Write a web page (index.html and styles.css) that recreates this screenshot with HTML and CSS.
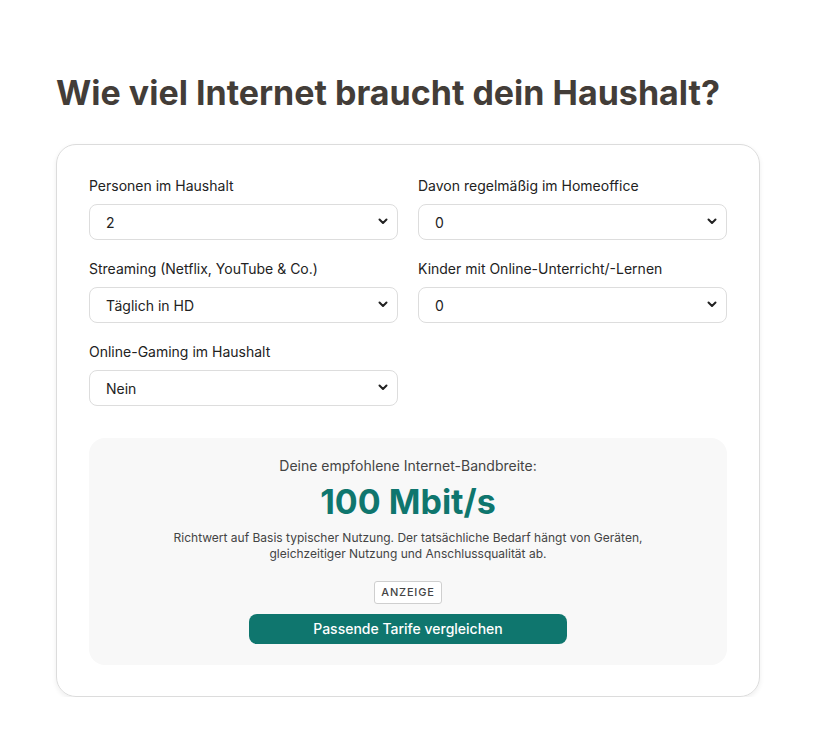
FILE: index.html
```html
<!DOCTYPE html>
<html lang="de">
<head>
<meta charset="utf-8">
<title>Bandbreiten-Rechner</title>
<link rel="stylesheet" href="styles.css">
</head>
<body>
<main class="page">
  <h1 class="title">Wie viel Internet braucht dein Haushalt?</h1>
  <section class="card">
    <div class="grid">
      <div class="field">
        <label class="label">Personen im Haushalt</label>
        <div class="select-wrap">
          <select class="select"><option>2</option></select>
          <svg class="chev" viewBox="0 0 10 7" width="10" height="7"><path d="M1.5 1.5 L5 5 L8.5 1.5" fill="none" stroke="#222" stroke-width="2" stroke-linecap="round" stroke-linejoin="round"/></svg>
        </div>
      </div>
      <div class="field">
        <label class="label">Davon regelmäßig im Homeoffice</label>
        <div class="select-wrap">
          <select class="select"><option>0</option></select>
          <svg class="chev" viewBox="0 0 10 7" width="10" height="7"><path d="M1.5 1.5 L5 5 L8.5 1.5" fill="none" stroke="#222" stroke-width="2" stroke-linecap="round" stroke-linejoin="round"/></svg>
        </div>
      </div>
      <div class="field">
        <label class="label">Streaming (Netflix, YouTube &amp; Co.)</label>
        <div class="select-wrap">
          <select class="select"><option>Täglich in HD</option></select>
          <svg class="chev" viewBox="0 0 10 7" width="10" height="7"><path d="M1.5 1.5 L5 5 L8.5 1.5" fill="none" stroke="#222" stroke-width="2" stroke-linecap="round" stroke-linejoin="round"/></svg>
        </div>
      </div>
      <div class="field">
        <label class="label">Kinder mit Online-Unterricht/-Lernen</label>
        <div class="select-wrap">
          <select class="select"><option>0</option></select>
          <svg class="chev" viewBox="0 0 10 7" width="10" height="7"><path d="M1.5 1.5 L5 5 L8.5 1.5" fill="none" stroke="#222" stroke-width="2" stroke-linecap="round" stroke-linejoin="round"/></svg>
        </div>
      </div>
      <div class="field">
        <label class="label">Online-Gaming im Haushalt</label>
        <div class="select-wrap">
          <select class="select"><option>Nein</option></select>
          <svg class="chev" viewBox="0 0 10 7" width="10" height="7"><path d="M1.5 1.5 L5 5 L8.5 1.5" fill="none" stroke="#222" stroke-width="2" stroke-linecap="round" stroke-linejoin="round"/></svg>
        </div>
      </div>
    </div>
    <div class="result">
      <p class="result-label">Deine empfohlene Internet-Bandbreite:</p>
      <p class="result-value">100 Mbit/s</p>
      <p class="result-note">Richtwert auf Basis typischer Nutzung. Der tatsächliche Bedarf hängt von Geräten,<br>gleichzeitiger Nutzung und Anschlussqualität ab.</p>
      <span class="ad">ANZEIGE</span>
      <a class="cta" href="#">Passende Tarife vergleichen</a>
    </div>
  </section>
</main>
</body>
</html>
```

FILE: styles.css
```css
* { box-sizing: border-box; }
html, body { margin: 0; padding: 0; background: #fff; }
body {
  font-family: Inter, "Liberation Sans", Arial, sans-serif;
  color: #222;
}
.page {
  width: 704px;
  margin: 0 0 0 56px;
  padding-top: 72px;
}
.title {
  margin: 0 0 30px;
  font-size: 34px;
  line-height: 42px;
  font-weight: 700;
  color: #433d38;
}
.card {
  border: 1px solid #dcdcdc;
  border-radius: 20px;
  padding: 32px 32px 31px;
  box-shadow: 0 2px 5px rgba(0,0,0,0.07);
}
.grid {
  display: grid;
  grid-template-columns: 1fr 1fr;
  column-gap: 20px;
  row-gap: 20px;
}
.field { display: flex; flex-direction: column; gap: 9px; }
.label { font-size: 14px; line-height: 18px; color: #222; }
.select-wrap { position: relative; }
.select {
  appearance: none;
  -webkit-appearance: none;
  width: 100%;
  height: 36px;
  border: 1px solid #dddddd;
  border-radius: 8px;
  background: #fff;
  padding: 0 16px;
  font-family: inherit;
  font-size: 14px;
  color: #222;
}
.chev { position: absolute; right: 10px; top: 14px; pointer-events: none; }
.result {
  margin-top: 32px;
  background: #f8f8f8;
  border-radius: 16px;
  padding: 19px 24px 21px;
  display: flex;
  flex-direction: column;
  align-items: center;
  text-align: center;
}
.result-label { margin: 0; font-size: 14px; line-height: 18px; color: #444; }
.result-value {
  margin: 6px 0 0;
  font-size: 34px;
  line-height: 42px;
  font-weight: 700;
  color: #0f766e;
}
.result-note {
  margin: 7px 0 0;
  font-size: 12px;
  line-height: 16px;
  color: #444;
}
.ad {
  margin-top: 19px;
  border: 1px solid #cfcfcf;
  border-radius: 3px;
  padding: 3px 6px;
  font-size: 11px;
  line-height: 15px;
  letter-spacing: 0.8px;
  color: #444;
  background: #fff;
  font-weight: 500;
}
.cta {
  margin-top: 10px;
  width: 318px;
  height: 30px;
  border-radius: 8px;
  background: #0f766e;
  color: #fff;
  font-size: 14px;
  font-weight: 500;
  line-height: 30px;
  text-decoration: none;
}
```
